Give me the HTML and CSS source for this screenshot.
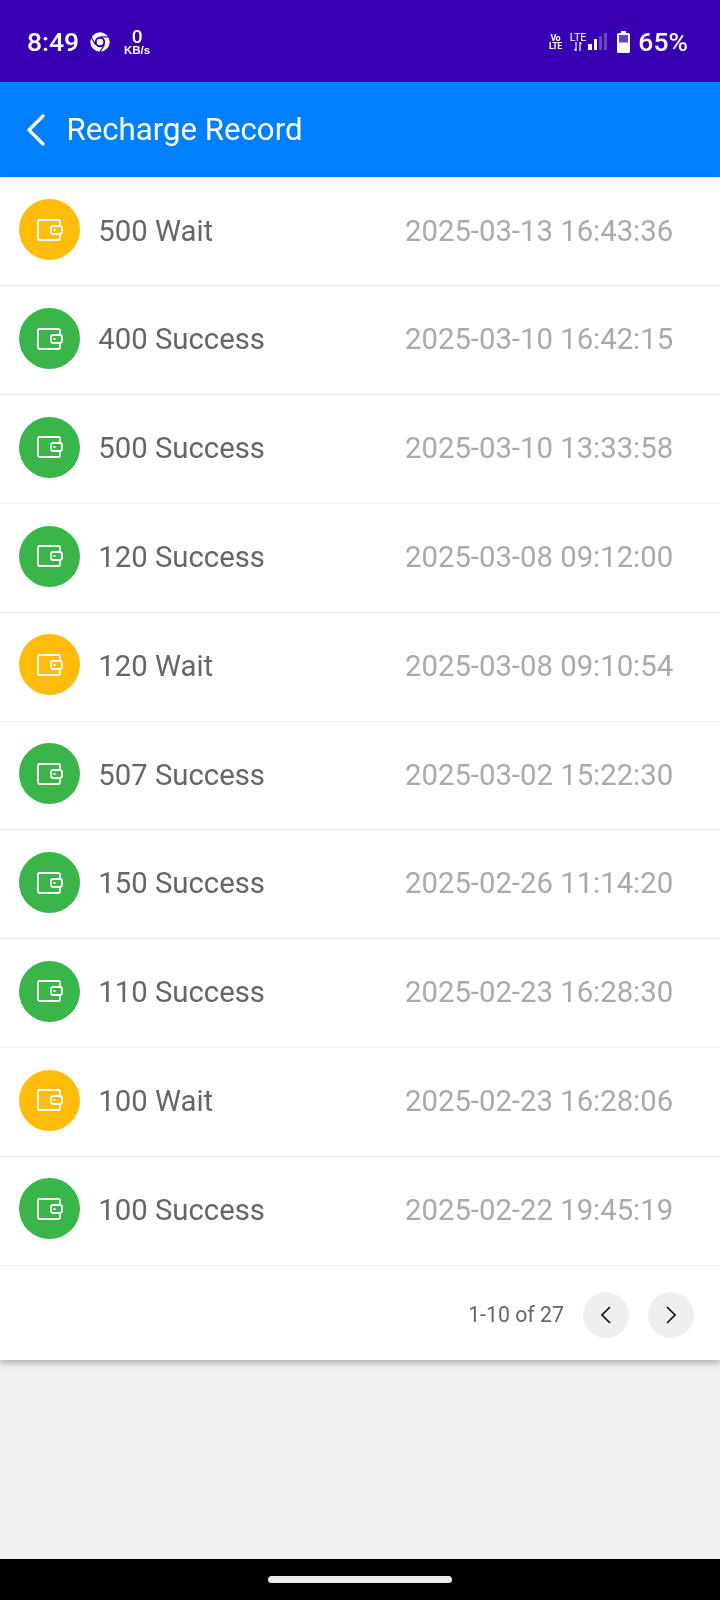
FILE: index.html
```html
<!DOCTYPE html>
<html lang="en">
<head>
<meta charset="utf-8">
<title>Recharge Record</title>
<link rel="stylesheet" href="styles.css">
</head>
<body>
<div class="screen">
  <div class="status">
    <div class="status-left">
      <span class="clock">8:49</span>
      <svg class="chrome" viewBox="0 0 20 20" width="20" height="20"><circle cx="10" cy="10" r="9.7" fill="#fff"/><circle cx="10" cy="10" r="5.2" fill="#3700b3"/><circle cx="10" cy="10" r="3.3" fill="#fff"/><path d="M10 4.8H19.4M5.5 12.6L0.8 4.5M14.5 12.6L9.8 20" stroke="#3700b3" stroke-width="1.2" fill="none"/></svg>
      <span class="speed"><span class="speed-num">0</span><span class="speed-unit">KB/s</span></span>
    </div>
    <div class="status-right">
      <span class="volte"><span>Vo</span><span>LTE</span></span>
      <span class="lte"><span>LTE</span>
        <svg viewBox="0 0 10 9" width="10" height="9"><path d="M3 0V9M1.5 7L3 9M7 0V9M7 0L8.5 2" stroke="#fff" stroke-width="1.2" fill="none"/></svg>
      </span>
      <span class="bars"><i class="b1"></i><i class="b2"></i><i class="b3 dim"></i><i class="b4 dim"></i></span>
      <svg class="battery" viewBox="0 0 13 22" width="13" height="22"><path d="M4 0H9V2H11.5Q13 2 13 3.5V20.5Q13 22 11.5 22H1.5Q0 22 0 20.5V3.5Q0 2 1.5 2H4Z" fill="#fff"/><rect x="2" y="4" width="9" height="7.5" fill="#3700b3" opacity=".75"/></svg>
      <span class="pct">65%</span>
    </div>
  </div>
  <header class="appbar">
    <svg class="back" viewBox="0 0 20 32" width="20" height="32"><path d="M17 2L3 16L17 30" stroke="#fff" stroke-width="3.2" stroke-linecap="round" stroke-linejoin="round" fill="none"/></svg>
    <h1 class="title">Recharge Record</h1>
  </header>
  <main class="card">
    <ul class="list">
      <li class="row"><span class="avatar wait"><svg class="wallet"><use href="#w"/></svg></span><span class="label">500 Wait</span><span class="date">2025-03-13 16:43:36</span></li>
      <li class="row"><span class="avatar ok"><svg class="wallet"><use href="#w"/></svg></span><span class="label">400 Success</span><span class="date">2025-03-10 16:42:15</span></li>
      <li class="row"><span class="avatar ok"><svg class="wallet"><use href="#w"/></svg></span><span class="label">500 Success</span><span class="date">2025-03-10 13:33:58</span></li>
      <li class="row"><span class="avatar ok"><svg class="wallet"><use href="#w"/></svg></span><span class="label">120 Success</span><span class="date">2025-03-08 09:12:00</span></li>
      <li class="row"><span class="avatar wait"><svg class="wallet"><use href="#w"/></svg></span><span class="label">120 Wait</span><span class="date">2025-03-08 09:10:54</span></li>
      <li class="row"><span class="avatar ok"><svg class="wallet"><use href="#w"/></svg></span><span class="label">507 Success</span><span class="date">2025-03-02 15:22:30</span></li>
      <li class="row"><span class="avatar ok"><svg class="wallet"><use href="#w"/></svg></span><span class="label">150 Success</span><span class="date">2025-02-26 11:14:20</span></li>
      <li class="row"><span class="avatar ok"><svg class="wallet"><use href="#w"/></svg></span><span class="label">110 Success</span><span class="date">2025-02-23 16:28:30</span></li>
      <li class="row"><span class="avatar wait"><svg class="wallet"><use href="#w"/></svg></span><span class="label">100 Wait</span><span class="date">2025-02-23 16:28:06</span></li>
      <li class="row"><span class="avatar ok"><svg class="wallet"><use href="#w"/></svg></span><span class="label">100 Success</span><span class="date">2025-02-22 19:45:19</span></li>
    </ul>
    <div class="pager">
      <span class="range">1-10 of 27</span>
      <button class="page-btn" type="button"><svg viewBox="0 0 14 20" width="14" height="20"><path d="M11 2L3 10L11 18" stroke="#111" stroke-width="1.7" fill="none"/></svg></button>
      <button class="page-btn" type="button"><svg viewBox="0 0 14 20" width="14" height="20"><path d="M3 2L11 10L3 18" stroke="#111" stroke-width="1.7" fill="none"/></svg></button>
    </div>
  </main>
  <div class="spacer"></div>
  <div class="navbar"><span class="pill"></span></div>
</div>
<svg class="defs" width="0" height="0"><symbol id="w" viewBox="0 0 26 22"><path d="M23 7V2.5Q23 1 21.5 1H2.5Q1 1 1 2.5V19.5Q1 21 2.5 21H21.5Q23 21 23 19.5V15" fill="none" stroke="#fff" stroke-width="1.8"/><rect x="14" y="7" width="11" height="8" rx="2.2" fill="none" stroke="#fff" stroke-width="1.8"/><rect x="16.5" y="10" width="2" height="2" fill="#fff"/></symbol></svg>
</body>
</html>
```
FILE: styles.css
```css
* { box-sizing: border-box; }
html, body { margin: 0; padding: 0; }
body { font-family: Roboto, "Liberation Sans", sans-serif; background: #f0f0f0; }
.screen { width: 720px; height: 1600px; display: flex; flex-direction: column; overflow: hidden; will-change: transform; }
.status { height: 82px; background: #3700b3; color: #fff; display: flex; align-items: center; justify-content: space-between; padding: 1px 32px 0 27px; flex: none; }
.status-left, .status-right { display: flex; align-items: center; }
.clock { font-size: 26.5px; font-weight: 500; width: 63px; }
.chrome { margin-right: 14px; }
.speed { display: flex; flex-direction: column; align-items: center; }
.speed-num { font-size: 19px; font-weight: 500; line-height: 17px; }
.speed-unit { font-size: 11.5px; font-weight: 700; line-height: 10px; font-family: "Liberation Sans", sans-serif; }
.volte { display: flex; flex-direction: column; font-size: 9px; font-weight: 700; line-height: 8px; letter-spacing: -.6px; align-items: center; margin-right: 8px; }
.lte { display: flex; flex-direction: column; font-size: 11px; line-height: 9px; letter-spacing: -.2px; align-items: center; margin-right: 2px; }
.lte svg { display: block; }
.bars { display: flex; align-items: flex-end; gap: 2px; height: 17px; margin-right: 10px; }
.bars i { display: block; width: 3.25px; background: #fff; }
.bars .b1 { height: 6px; }
.bars .b2 { height: 11px; }
.bars .b3 { height: 14px; }
.bars .b4 { height: 17px; }
.bars .dim { background: #6a46c6; }
.battery { margin-right: 8px; }
.pct { font-size: 26.5px; font-weight: 500; }
.appbar { height: 95px; background: #0080ff; color: #fff; display: flex; align-items: center; padding: 0 0 0 26px; flex: none; }
.back { margin-right: 20.5px; }
.title { margin: 0; font-size: 31.2px; font-weight: 400; }
.card { position: relative; background: #fff; box-shadow: 0 3px 6px rgba(0,0,0,.28); flex: none; }
.list { list-style: none; margin: 0; padding: .7px 0 0; }
.row { height: 108.8px; display: flex; align-items: center; padding: 0 0 0 19px; border-bottom: 1px solid #efefef; }
.avatar { width: 61px; height: 61px; margin-bottom: 3.6px; border-radius: 50%; display: flex; align-items: center; justify-content: center; margin-right: 18.3px; flex: none; }
.avatar.wait { background: #ffbc0a; }
.avatar.ok { background: #39b54a; }
.wallet { width: 26px; height: 22px; display: block; }
.label { font-size: 29.3px; color: #666; width: 306.7px; flex: none; margin-bottom: 2px; }
.date { font-size: 29.3px; color: #aaa; white-space: nowrap; margin-bottom: 2px; }
.pager { height: 94.3px; display: flex; align-items: center; justify-content: flex-end; padding: 4px 26px 0 0; }
.range { font-size: 21.3px; color: #666; margin-right: 19px; }
.page-btn { width: 46px; height: 46px; border-radius: 50%; border: 0; background: #efefef; padding: 0; display: flex; align-items: center; justify-content: center; }
.page-btn + .page-btn { margin-left: 19px; }
.spacer { flex: 1; }
.navbar { height: 41px; background: #000; display: flex; justify-content: center; padding-top: 17px; flex: none; }
.pill { width: 184px; height: 7px; border-radius: 4px; background: #ececec; }
.defs { position: absolute; }
```
